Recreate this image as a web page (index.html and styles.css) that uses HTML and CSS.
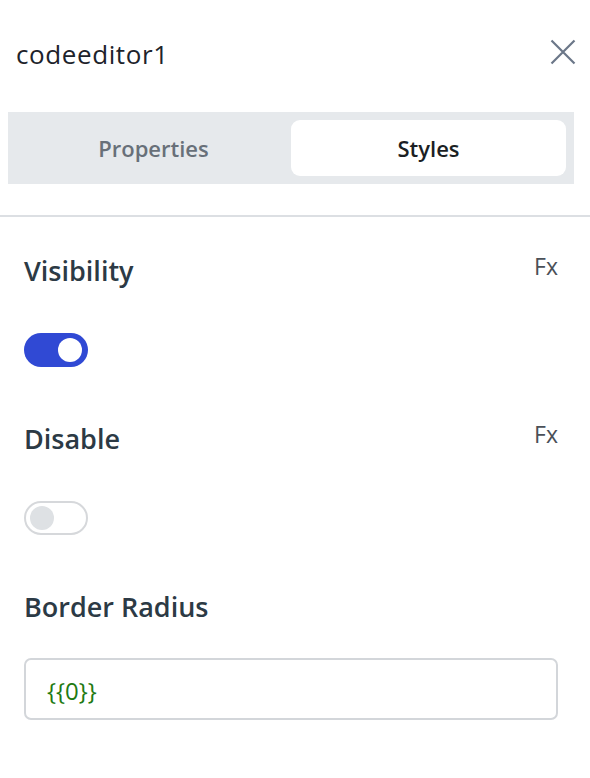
FILE: index.html
```html
<!DOCTYPE html>
<html>
<head>
<meta charset="utf-8">
<link rel="stylesheet" href="styles.css">
</head>
<body>
<div class="panel">
  <div class="header">
    <div class="title">codeeditor1</div>
    <svg class="close" width="26" height="26" viewBox="0 0 26 26"><path d="M1.5 1.5 L24.5 24.5 M24.5 1.5 L1.5 24.5" stroke="#6b7788" stroke-width="2.2" fill="none"/></svg>
  </div>
  <div class="tabs">
    <div class="tab">Properties</div>
    <div class="tab active">Styles</div>
  </div>
  <div class="divider"></div>
  <div class="content">
    <div class="label-row first"><span class="label">Visibility</span><span class="fx">Fx</span></div>
    <div class="toggle on"><span class="knob"></span></div>
    <div class="label-row"><span class="label">Disable</span><span class="fx">Fx</span></div>
    <div class="toggle off"><span class="knob"></span></div>
    <div class="label-row"><span class="label">Border Radius</span></div>
    <div class="input"><span class="code">{{0}}</span></div>
  </div>
</div>
</body>
</html>
```
FILE: styles.css
```css
html, body { margin: 0; padding: 0; background: #fff; }
body { font-family: "Open Sans", "Noto Sans", sans-serif; width: 590px; }
.panel { display: flex; flex-direction: column; }
.header { display: flex; justify-content: space-between; align-items: flex-start; padding: 36px 14px 0 16px; height: 36px; }
.title { font-size: 26px; line-height: 36px; color: #1d232b; letter-spacing: 0.6px; }
.close { display: block; margin-top: 3px; }
.tabs { display: flex; margin: 40px 16px 0 8px; background: #e6e9ec; padding: 8px; height: 56px; }
.tab { flex: 1; display: flex; align-items: center; justify-content: center; font-size: 22px; font-weight: 600; color: #687079; border-radius: 9px; }
.tab.active { background: #fff; color: #1b1f24; }
.divider { height: 2px; background: #dcdfe3; margin-top: 31px; }
.content { padding: 0 32px 0 24px; display: flex; flex-direction: column; align-items: flex-start; }
.label-row { align-self: stretch; display: flex; justify-content: space-between; align-items: flex-start; margin-top: 54px; height: 36px; }
.label-row.first { margin-top: 36px; }
.label { font-size: 27px; line-height: 36px; font-weight: 600; color: #2c3a45; }
.fx { font-size: 23px; line-height: 36px; color: #4a5058; margin-top: -5px; }
.toggle { width: 64px; height: 34px; border-radius: 17px; margin-top: 44px; position: relative; box-sizing: border-box; }
.toggle.on { background: #3049d4; }
.toggle.off { background: #fff; border: 2px solid #d6d8db; }
.knob { position: absolute; width: 24px; height: 24px; border-radius: 50%; top: 5px; }
.toggle.on .knob { background: #fff; right: 6px; }
.toggle.off .knob { background: #dee1e4; left: 4px; top: 3px; }
.input { align-self: stretch; margin-top: 33px; height: 62px; border: 2px solid #d3d6da; border-radius: 7px; box-sizing: border-box; display: flex; align-items: center; padding-left: 21px; }
.code { font-size: 24px; color: #1f7a12; margin-top: 2px; }
```
